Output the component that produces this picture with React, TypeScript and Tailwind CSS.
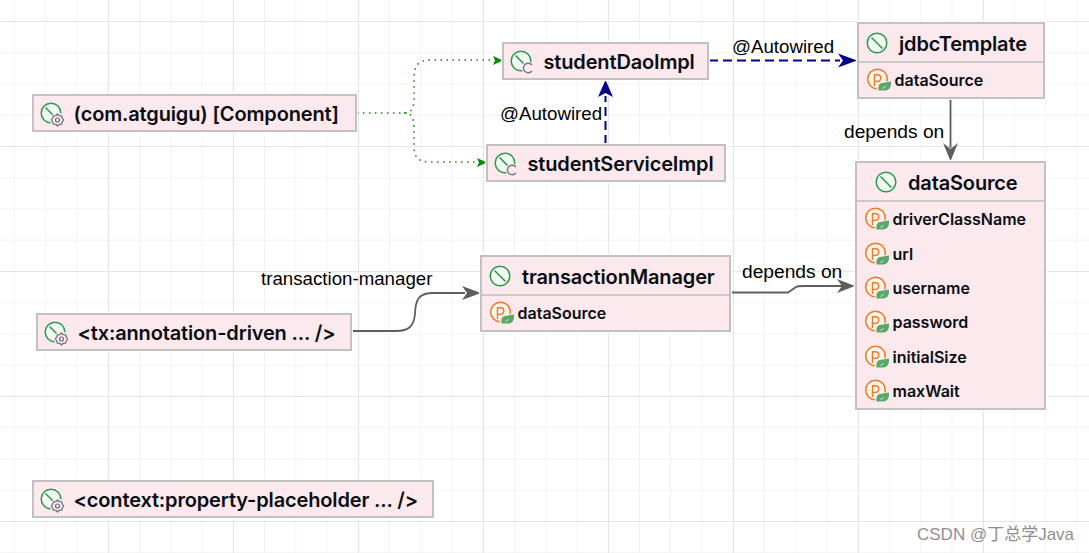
const inter = "font-['Inter','Liberation_Sans',sans-serif]";

function Leaf({ badge }: { badge?: "gear" | "c" }) {
  return (
    <svg width="24" height="26" viewBox="0 0 24 26" className="shrink-0 overflow-visible">
      <circle cx="12" cy="13" r="9.8" fill="#f3faf4" stroke="#2f9a4c" strokeWidth="1.5" />
      <path d="M6.5 7.5 L17.5 18.500" stroke="#2f9a4c" strokeWidth="1.6" />
      {badge === "gear" && (
        <g>
          <circle cx="18.5" cy="20" r="7.500" fill="#fbe9ee" />
          <path d="M18.5 14 L20.2 15.700 L22.6 15.800 L23.3 18 L24.700 20 L23.3 22 L22.6 24.2 L20.2 24.300 L18.5 26 L16.8 24.3 L14.4 24.2 L13.7 22 L12.3 20 L13.7 18 L14.4 15.800 L16.8 15.700 Z" fill="none" stroke="#6e7180" strokeWidth="1.3" strokeLinejoin="round" />
          <circle cx="18.500" cy="20" r="2" fill="none" stroke="#6e7180" strokeWidth="1.2" />
        </g>
      )}
      {badge === "c" && (
        <g>
          <circle cx="19" cy="20" r="6.500" fill="#fbe9ee" />
          <path d="M23 17 A4.800 4.800 0 1 0 23 23" fill="none" stroke="#75788a" strokeWidth="1.400" />
        </g>
      )}
    </svg>
  );
}

function Prop() {
  return (
    <svg width="24" height="26" viewBox="0 0 24 26" className="shrink-0 overflow-visible">
      <circle cx="11.500" cy="12" r="9.800" fill="#fdf3ee" stroke="#ee7a22" strokeWidth="1.500" />
      <path d="M8.500 19 V7.800 H11.500 A3.300 3.300 0 0 1 11.500 14.400 H8.500" fill="none" stroke="#ee7a22" strokeWidth="1.400" />
      <path d="M11 24.500 C10.500 18 12.500 15.500 16 15 L26 13.500 C26.500 20 24 24.500 19 24.500 Z" fill="#fbe9ee" />
      <path d="M12.500 23.500 C12 18 13.500 16.500 16 16 L25 14.500 C25.400 20 23.500 23.500 19 23.500 Z" fill="#58a868" />
      <path d="M16.500 21.500 L19.500 19.500" stroke="#d8eedd" strokeWidth="1" />
    </svg>
  );
}

function Title({ children, badge, className }: { children: string; badge?: "gear" | "c"; className: string }) {
  return (
    <div className={`absolute flex h-[38px] items-center gap-[11px] border-2 border-[#c2c1c1] bg-[#fbe9ee] pl-[4.5px] shadow-[0_0_0_1px_#ffffff] ${className}`}>
      <Leaf badge={badge} />
      <span className={`${inter} mt-[1px] whitespace-nowrap text-[20px] font-semibold leading-none tracking-[-0.15px] text-[#0a0d12]`}>{children}</span>
    </div>
  );
}

function Bean({ title, props, className, headClass }: { title: string; props: string[]; className: string; headClass: string }) {
  return (
    <div className={`absolute flex flex-col border-2 border-[#c2c1c1] bg-[#fbe9ee] shadow-[0_0_0_1px_#ffffff] ${className}`}>
      <div className={`flex h-[39px] items-center gap-[10px] border-b-2 border-[#cbc8c9] ${headClass}`}>
        <Leaf />
        <span className={`${inter} mt-[2px] whitespace-nowrap text-[20px] font-semibold leading-none tracking-[-0.15px] text-[#0a0d12]`}>{title}</span>
      </div>
      <div className="flex flex-col">
        {props.map((p) => (
          <div key={p} className="flex h-[34.4px] items-center gap-[5px] pl-[6.500px]">
            <Prop />
            <span className={`${inter} whitespace-nowrap text-[16px] font-semibold leading-none text-[#0a0d12]`}>{p}</span>
          </div>
        ))}
      </div>
    </div>
  );
}

function Label({ children, className }: { children: string; className: string }) {
  return (
    <span className={`absolute font-['Liberation_Sans',sans-serif] whitespace-nowrap leading-none text-black ${className}`}>{children}</span>
  );
}

export default function App() {
  return (
    <div className="relative h-[553px] w-[1089px] overflow-hidden bg-white bg-[linear-gradient(to_right,#e5e5e5_1px,transparent_1px),linear-gradient(to_bottom,#e5e5e5_1px,transparent_1px),linear-gradient(to_right,#f3f3f3_1px,transparent_1px),linear-gradient(to_bottom,#f3f3f3_1px,transparent_1px)] bg-size-[125px_125px,125px_125px,31.25px_31.25px,31.25px_31.25px] bg-position-[108px_0,0_21px,14px_0,0_21px]">
      <svg width="1089" height="553" className="absolute left-0 top-0">
        <g fill="none" stroke="#0a8a0a" strokeWidth="1.500" strokeDasharray="1.500 4.500">
          <path d="M357 113 H404 C412 113 414 108 414 98 V78 C414 66 418 60 430 60 H493" />
          <path d="M404 113 C412 113 414 118 414 128 V146 C414 157 418 162 430 162 H477" />
        </g>
        <path d="M503 60.500 L493 56 L495 60.500 L493 65 Z" fill="#0a8a0a" />
        <path d="M487 162.500 L477 158 L479 162.500 L477 167 Z" fill="#0a8a0a" />
        <g fill="none" stroke="#00008b" strokeWidth="2" strokeDasharray="9 5">
          <path d="M709 60.500 H840" />
          <path d="M605.500 144 V96" />
        </g>
        <path d="M857 60.500 L838 53.500 L843 60.500 L838 67.500 Z" fill="#00008b" />
        <path d="M605.500 80 L598 97 L605.500 93 L613 97 Z" fill="#00008b" />
        <g fill="none" stroke="#5e5e5e" strokeWidth="1.800">
          <path d="M950.500 99 V148" />
          <path d="M352 331 H396 C409 331 414 326 415 314 C415.500 299 419 293 433 293 H465" />
          <path d="M731 292.500 H788 L796 287 Q798 286 804 286 H842" />
        </g>
        <path d="M950.500 161 L943 143 L950.500 149 L958 143 Z" fill="#5e5e5e" />
        <path d="M481 293 L462 286 L467 293 L462 300 Z" fill="#5e5e5e" />
        <path d="M855 286 L837 279 L842 286 L837 293 Z" fill="#5e5e5e" />
      </svg>

      <Title badge="gear" className="left-[32px] top-[94px] w-[325px]">(com.atguigu) [Component]</Title>
      <Title badge="c" className="left-[502px] top-[42px] w-[207px]">studentDaoImpl</Title>
      <Title badge="c" className="left-[486px] top-[144px] w-[240px]">studentServiceImpl</Title>
      <Title badge="gear" className="left-[36px] top-[313px] w-[316px]">{"<tx:annotation-driven ... />"}</Title>
      <Title badge="gear" className="left-[32px] top-[480px] w-[402px]">{"<context:property-placeholder ... />"}</Title>

      <Bean title="jdbcTemplate" props={["dataSource"]} className="left-[857px] top-[22px] w-[188px]" headClass="pl-[6px]" />
      <Bean title="transactionManager" props={["dataSource"]} className="left-[480px] top-[255px] w-[251px]" headClass="pl-[6px]" />
      <Bean title="dataSource" props={["driverClassName", "url", "username", "password", "initialSize", "maxWait"]} className="left-[855px] top-[161px] w-[191px]" headClass="pl-[17px]" />

      <Label className="left-[732px] top-[38px] text-[18.700px]">@Autowired</Label>
      <Label className="left-[500px] top-[105px] text-[18.700px]">@Autowired</Label>
      <Label className="left-[844px] top-[122px] text-[19.200px]">depends on</Label>
      <Label className="left-[261px] top-[270px] text-[18.700px]">transaction-manager</Label>
      <Label className="left-[742px] top-[262px] text-[19.200px]">depends on</Label>

      <span className="absolute left-[917px] top-[525px] font-['Liberation_Sans','Noto_Sans_CJK_SC',sans-serif] whitespace-nowrap text-[17px] leading-[20px] text-[#8f8f8f]">CSDN @丁总学Java</span>
    </div>
  );
}
